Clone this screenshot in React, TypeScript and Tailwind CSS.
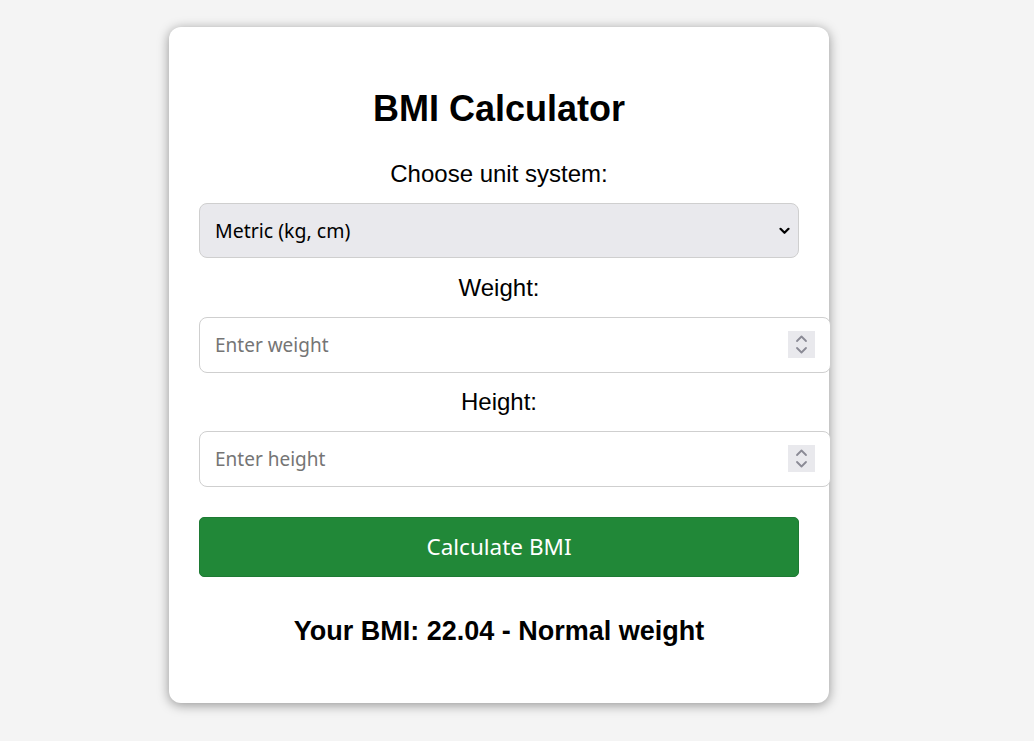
const Spinner = () => (
  <div className="absolute left-[589px] top-[14px] flex h-[27px] w-[27px] items-center justify-center bg-[#e9e9ed]">
    <svg width="13" height="21" viewBox="0 0 13 21" fill="none" stroke="#8a8a95" strokeWidth="1.8" strokeLinecap="round" strokeLinejoin="round">
      <path d="M2 7 L6.5 2.5 L11 7" />
      <path d="M2 14 L6.5 18.5 L11 14" />
    </svg>
  </div>
);

const NumberField = ({ placeholder }: { placeholder: string }) => (
  <div className="relative w-[632px]">
    <input
      type="text"
      placeholder={placeholder}
      className="block h-[56px] w-[632px] rounded-[8px] border border-[#cfcfcf] bg-white px-[15px] text-[19px] text-black outline-none placeholder:text-[#757575] font-['Noto_Sans',sans-serif]"
    />
    <Spinner />
  </div>
);

const Label = ({ children }: { children: string }) => (
  <div className="text-center text-[24px] leading-[28px] text-black font-['Liberation_Sans',Arial,sans-serif]">
    {children}
  </div>
);

const App = () => {
  return (
    <div className="min-h-[741px] bg-[#f4f4f4] pl-[169px] pt-[27px] font-['Liberation_Sans',Arial,sans-serif]">
      <div className="w-[660px] rounded-[12px] bg-white px-[30px] pt-[61px] pb-[56px] shadow-[0_2px_12px_rgba(0,0,0,0.4)]">
        <h1 className="text-center text-[36px] font-bold leading-[41px] text-black">BMI Calculator</h1>

        <div className="mt-[31px]">
          <Label>Choose unit system:</Label>
        </div>
        <div className="relative mt-[15px]">
          <select className="block h-[55px] w-[600px] appearance-none rounded-[8px] border border-[#cfcfcf] bg-[#e9e9ed] px-[15px] text-[19.5px] text-black outline-none font-['Noto_Sans',sans-serif]">
            <option>Metric (kg, cm)</option>
            <option>Imperial (lbs, in)</option>
          </select>
          <svg
            className="pointer-events-none absolute right-[9px] top-[24px]"
            width="11"
            height="8"
            viewBox="0 0 11 8"
            fill="none"
            stroke="#000"
            strokeWidth="2.2"
            strokeLinecap="round"
            strokeLinejoin="round"
          >
            <path d="M1.5 1.8 L5.5 5.8 L9.5 1.8" />
          </svg>
        </div>

        <div className="mt-[16px]">
          <Label>Weight:</Label>
        </div>
        <div className="mt-[15px]">
          <NumberField placeholder="Enter weight" />
        </div>

        <div className="mt-[15px]">
          <Label>Height:</Label>
        </div>
        <div className="mt-[15px]">
          <NumberField placeholder="Enter height" />
        </div>

        <button className="mt-[30px] block h-[60px] w-[600px] rounded-[5px] border border-[#1e7a34] bg-[#218838] text-[22.5px] text-white font-['Noto_Sans',sans-serif]">
          Calculate BMI
        </button>

        <div className="mt-[39px] text-center text-[27px] font-bold leading-[31px] text-black">
          Your BMI: 22.04 - Normal weight
        </div>
      </div>
    </div>
  );
};

export default App;
